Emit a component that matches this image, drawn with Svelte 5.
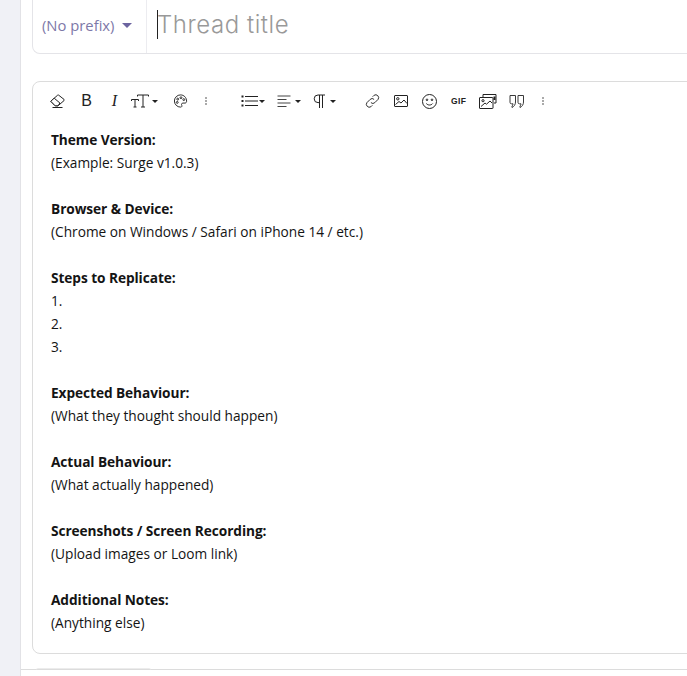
<script>
  const sections = [
    { h: 'Theme Version:', l: ['(Example: Surge v1.0.3)'] },
    { h: 'Browser & Device:', l: ['(Chrome on Windows / Safari on iPhone 14 / etc.)'] },
    { h: 'Steps to Replicate:', l: ['1.', '2.', '3.'] },
    { h: 'Expected Behaviour:', l: ['(What they thought should happen)'] },
    { h: 'Actual Behaviour:', l: ['(What actually happened)'] },
    { h: 'Screenshots / Screen Recording:', l: ['(Upload images or Loom link)'] },
    { h: 'Additional Notes:', l: ['(Anything else)'] }
  ];
</script>

<div class="page">
  <aside class="rail"></aside>
  <main class="main">
    <div class="titlebox">
      <div class="prefix"><span>(No prefix)</span><i class="caret purple"></i></div>
      <div class="title"><b class="cursor"></b><span>Thread title</span></div>
    </div>

    <section class="editor">
      <div class="toolbar">
        <div class="group g1">
          <svg class="ic" width="15" height="16" viewBox="0 0 15 16"><path d="M.8 8.300 7.600 2.200a.8.8 0 0 1 1.100 0l5.300 4.200a.8.8 0 0 1 0 1.200L8 12.800H5.200z"/><path class="fillish" d="M.8 8.300 4.200 5.200l5.700 4.800L8 12.800H5.200z"/><path d="M2.500 14.500h10"/></svg>
          <span class="glyph bold">B</span>
          <span class="glyph ital">I</span>
          <span class="tt t1"><svg class="ic" width="18" height="14" viewBox="0 0 18 14"><path d="M.5 7V5.500h7V7M4 5.500v7.500M2.500 13h3M6.500 2.500V1h11v1.500M12 1v12M10 13h4"/></svg><i class="caret"></i></span>
          <svg class="ic pal" width="15" height="16" viewBox="0 0 16 16"><path d="M8 1.500a6.500 6.500 0 1 0 0 13c1.600 0 1.800-1.200 1.300-2-.6-1 0-2.300 1.300-2.300h2.200c1 0 1.700-.8 1.700-1.900C14.500 4.200 11.600 1.500 8 1.500z"/><circle cx="5" cy="6" r="1"/><circle cx="8.500" cy="4.500" r="1"/><circle cx="11.500" cy="6.500" r="1"/><circle cx="4.500" cy="9.500" r="1"/></svg>
          <span class="dots d1"><i></i><i></i><i></i></span>
        </div>
        <div class="group g2">
          <span class="tt t3"><svg class="ic" width="17" height="14" viewBox="0 0 17 14"><path d="M4 2.500h13M4 7h13M4 11.500h13"/><path class="thick" d="M.5 2.500h2M.5 7h2M.5 11.500h2"/></svg><i class="caret"></i></span>
          <span class="tt t2"><svg class="ic grey" width="14" height="14" viewBox="0 0 14 14"><path d="M.5 2h13M.5 5.500h9M.5 9h13M.5 12.500h9"/></svg><i class="caret"></i></span>
          <span class="tt t2"><svg class="ic" width="13" height="15" viewBox="0 0 13 15"><path d="M12 1H5a3.800 3.800 0 0 0 0 7.600h1.500M6.500 1v13M9.500 1v13"/></svg><i class="caret"></i></span>
        </div>
        <div class="group g3">
          <svg class="ic" width="15" height="16" viewBox="0 0 16 16"><path d="M6.300 9.700a3 3 0 0 0 4.200 0l3.500-3.500a3.100 3.100 0 0 0-4.300-4.300L8.200 3.400M9.700 6.300a3 3 0 0 0-4.200 0L2 9.800a3.100 3.100 0 0 0 4.300 4.300l1.500-1.500"/></svg>
          <svg class="ic" width="14" height="14" viewBox="0 0 14 14"><rect x=".5" y="1.500" width="13" height="11" rx=".5"/><circle cx="3.800" cy="4.800" r="1.200"/><path d="M1.500 10.500 5 7.500l2 1.500 3-3 3 3.500"/></svg>
          <svg class="ic" width="15" height="15" viewBox="0 0 15 15"><circle cx="7.500" cy="7.500" r="7"/><circle cx="5" cy="5.800" r=".8"/><circle cx="10" cy="5.800" r=".8"/><path d="M4.300 9.500c1.600 2 4.800 2 6.400 0"/></svg>
          <span class="gif">GIF</span>
          <svg class="ic" width="18" height="16" viewBox="0 0 18 16"><path d="M4 4V1.500h13V10h-2"/><rect x=".5" y="4.500" width="13.500" height="11" rx=".5"/><circle cx="4" cy="7.700" r="1.100"/><path d="M2 13.500 6 10l1.500 1.200L11 8l2 2"/><path class="thick" d="M15.500 3.500V7"/></svg>
          <svg class="ic quote" width="16" height="15" viewBox="0 0 16 15"><path d="M1 1.500h5.500V8c0 2.500-1.300 4.500-3.500 5.500V12c.6-.4 1-1 1-2.200H2.500A1.500 1.500 0 0 1 1 8.300zM9 1.500h5.500V8c0 2.500-1.300 4.500-3.500 5.500V12c.6-.4 1-1 1-2.200h-1.500A1.500 1.500 0 0 1 9 8.300z"/></svg>
          <span class="dots d2"><i></i><i></i><i></i></span>
        </div>
      </div>

      <div class="body">
        {#each sections as s}
          <div class="block">
            <p class="head">{s.h}</p>
            {#each s.l as line}<p>{line}</p>{/each}
          </div>
        {/each}
      </div>
    </section>

    <div class="footer"><div class="tab"></div></div>
  </main>
</div>

<style>
  :global(body) { margin: 0; background: #fff; }
  .page { display: flex; width: 687px; height: 676px; overflow: hidden; font-family: "Open Sans", "Noto Sans", sans-serif; color: #141414; }
  .rail { flex: 0 0 21px; background: #f0f1f6; border-right: 1px solid #e2e2e6; box-sizing: border-box; }
  .main { flex: 1; min-width: 0; padding-left: 11px; display: flex; flex-direction: column; }

  .titlebox { display: flex; height: 54px; width: 680px; box-sizing: border-box; border: 1px solid #e4e4e8; border-top: 0; border-radius: 0 0 8px 8px; flex: none; }
  .prefix { width: 104px; flex: none; border-right: 1px solid #ececf0; display: flex; align-items: center; gap: 8px; padding-left: 9px; padding-bottom: 3px; font-size: 14.800px; color: #7d78a8; }
  .title { flex: 1; display: flex; align-items: center; padding-left: 10px; padding-bottom: 4px; position: relative; font-family: "Inter", sans-serif; font-size: 24px; font-weight: 300; color: #999; letter-spacing: .55px; }
  .cursor { position: absolute; left: 10px; top: 10px; width: 1px; height: 29px; background: #222; }
  .caret { display: inline-block; width: 0; height: 0; border-left: 3px solid transparent; border-right: 3px solid transparent; border-top: 3px solid #222; }
  .caret.purple { border-left-width: 5px; border-right-width: 5px; border-top: 5px solid #6c64a0; }

  .editor { margin-top: 27px; width: 680px; height: 573px; box-sizing: border-box; border: 1px solid #dcdcdc; border-radius: 8px; flex: none; }
  .toolbar { display: flex; align-items: center; height: 38px; padding-left: 17px; color: #222; }
  .group { display: flex; align-items: center; }
  .g1 { gap: 13px; width: 191px; }
  .g2 { gap: 12px; width: 124px; }
  .g3 { gap: 14px; }
  .ic { fill: none; stroke: #222; stroke-width: 1; flex: none; display: block; }
  .fillish { fill: #fff; }
  .grey { stroke: #444; }
  .thick { stroke-width: 2; }
  .glyph { font-size: 16px; line-height: 16px; color: #222; text-align: center; }
  .bold { width: 17px; font-family: "Liberation Sans", sans-serif; }
  .ital { width: 13px; font-family: "Liberation Serif", serif; font-style: italic; }
  .tt { display: flex; align-items: center; gap: 3px; }
  .t1 { margin-left: -3px; }
  .t2 { gap: 4px; }
  .t3 { gap: 1px; }
  .pal { margin-left: 2px; }
  .dots { display: flex; flex-direction: column; gap: 1px; }
  .d1 { margin-left: 4px; }
  .d2 { margin-left: 3px; }
  .dots i { display: block; width: 2px; height: 2px; background: #aaa; }
  .gif { font-family: "Liberation Sans", sans-serif; font-size: 8.500px; font-weight: 700; letter-spacing: .4px; color: #222; width: 14px; text-align: center; }
  .quote { stroke: #3a3a3a; margin-left: -2px; }

  .body { padding: 8px 0 0 18px; font-size: 13.700px; line-height: 23px; }
  .block { margin-bottom: 23px; }
  p { margin: 0; }
  .head { font-weight: 700; letter-spacing: -.07px; }

  .footer { margin-top: 15px; margin-left: -11px; flex: 1; border-top: 1px solid #dcdcdc; position: relative; }
  .tab { position: absolute; left: 15px; top: -2px; width: 115px; height: 1px; border-top: 1px solid #ececec; border-radius: 8px 8px 0 0; }
</style>
